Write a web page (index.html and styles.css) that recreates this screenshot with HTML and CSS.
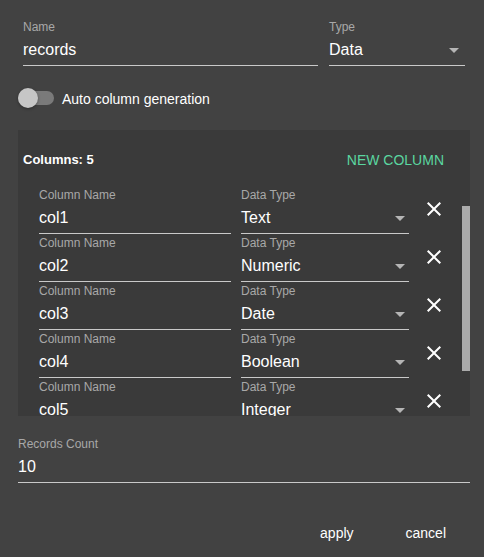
FILE: index.html
```html
<!DOCTYPE html>
<html>
<head>
<meta charset="utf-8">
<link rel="stylesheet" href="styles.css">
</head>
<body>
<div class="dialog">
  <div class="top-row">
    <div class="field field-name">
      <div class="field-label">Name</div>
      <div class="field-value">records</div>
    </div>
    <div class="field field-type">
      <div class="field-label">Type</div>
      <div class="field-value"><span>Data</span><span class="arrow arrow-top"></span></div>
    </div>
  </div>

  <div class="toggle-row">
    <div class="toggle"><div class="thumb"></div></div>
    <span class="toggle-label">Auto column generation</span>
  </div>

  <div class="panel">
    <div class="panel-head">
      <span class="count">Columns: 5</span>
      <span class="new-col">NEW COLUMN</span>
    </div>
    <div class="list-wrap">
      <div class="rows">
        <div class="row">
          <div class="field col-name"><div class="field-label">Column Name</div><div class="field-value">col1</div></div>
          <div class="field col-type"><div class="field-label">Data Type</div><div class="field-value"><span>Text</span><span class="arrow"></span></div></div>
          <svg class="close" viewBox="0 0 24 24"><path d="M19 6.41L17.59 5 12 10.59 6.41 5 5 6.41 10.59 12 5 17.59 6.41 19 12 13.41 17.59 19 19 17.59 13.41 12z"/></svg>
        </div>
        <div class="row">
          <div class="field col-name"><div class="field-label">Column Name</div><div class="field-value">col2</div></div>
          <div class="field col-type"><div class="field-label">Data Type</div><div class="field-value"><span>Numeric</span><span class="arrow"></span></div></div>
          <svg class="close" viewBox="0 0 24 24"><path d="M19 6.41L17.59 5 12 10.59 6.41 5 5 6.41 10.59 12 5 17.59 6.41 19 12 13.41 17.59 19 19 17.59 13.41 12z"/></svg>
        </div>
        <div class="row">
          <div class="field col-name"><div class="field-label">Column Name</div><div class="field-value">col3</div></div>
          <div class="field col-type"><div class="field-label">Data Type</div><div class="field-value"><span>Date</span><span class="arrow"></span></div></div>
          <svg class="close" viewBox="0 0 24 24"><path d="M19 6.41L17.59 5 12 10.59 6.41 5 5 6.41 10.59 12 5 17.59 6.41 19 12 13.41 17.59 19 19 17.59 13.41 12z"/></svg>
        </div>
        <div class="row">
          <div class="field col-name"><div class="field-label">Column Name</div><div class="field-value">col4</div></div>
          <div class="field col-type"><div class="field-label">Data Type</div><div class="field-value"><span>Boolean</span><span class="arrow"></span></div></div>
          <svg class="close" viewBox="0 0 24 24"><path d="M19 6.41L17.59 5 12 10.59 6.41 5 5 6.41 10.59 12 5 17.59 6.41 19 12 13.41 17.59 19 19 17.59 13.41 12z"/></svg>
        </div>
        <div class="row">
          <div class="field col-name"><div class="field-label">Column Name</div><div class="field-value">col5</div></div>
          <div class="field col-type"><div class="field-label">Data Type</div><div class="field-value"><span>Integer</span><span class="arrow"></span></div></div>
          <svg class="close" viewBox="0 0 24 24"><path d="M19 6.41L17.59 5 12 10.59 6.41 5 5 6.41 10.59 12 5 17.59 6.41 19 12 13.41 17.59 19 19 17.59 13.41 12z"/></svg>
        </div>
      </div>
      <div class="scrollbar"><div class="scroll-thumb"></div></div>
    </div>
  </div>

  <div class="field records">
    <div class="field-label">Records Count</div>
    <div class="field-value">10</div>
  </div>

  <div class="actions">
    <button class="btn">apply</button>
    <button class="btn">cancel</button>
  </div>
</div>
</body>
</html>
```

FILE: styles.css
```css
html, body {
  margin: 0;
  padding: 0;
  background: #424242;
  font-family: "Liberation Sans", Arial, sans-serif;
  color: #ffffff;
}

.dialog {
  width: 484px;
  height: 557px;
  overflow: hidden;
}

.top-row {
  display: flex;
  gap: 11px;
  padding: 20px 19px 0 23px;
}

.field {
  display: flex;
  flex-direction: column;
}

.field-label {
  font-size: 12px;
  line-height: 14px;
  color: #a8a8a8;
  white-space: nowrap;
}

.field-value {
  font-size: 16px;
  line-height: 20px;
  margin-top: 6px;
  padding-bottom: 5px;
  border-bottom: 1px solid #c9c9c9;
  color: #ffffff;
  display: flex;
  justify-content: space-between;
  align-items: center;
}

.field-name { width: 295px; }
.field-type { flex: 1; }

.arrow {
  width: 0;
  height: 0;
  border-left: 5px solid transparent;
  border-right: 5px solid transparent;
  border-top: 5px solid #b5b5b5;
  margin-right: 4px;
}
.arrow-top { margin-right: 6px; }

.toggle-row {
  display: flex;
  align-items: center;
  gap: 8px;
  height: 20px;
  margin: 22px 0 0 18px;
}

.toggle {
  width: 36px;
  height: 14px;
  border-radius: 7px;
  background: #7a7a7a;
}

.thumb {
  width: 20px;
  height: 20px;
  margin-top: -3px;
  border-radius: 50%;
  background: #c6c6c6;
  box-shadow: 0 1px 3px rgba(0, 0, 0, 0.35);
}

.toggle-label {
  font-size: 14px;
  line-height: 16px;
  padding-top: 1px;
}

.panel {
  margin: 22px 14px 0 18px;
  background: #3a3a3a;
}

.panel-head {
  display: flex;
  justify-content: space-between;
  align-items: center;
  padding: 22px 26px 0 5px;
  height: 16px;
}

.count {
  font-size: 13px;
  font-weight: bold;
  line-height: 16px;
}

.new-col {
  font-size: 14px;
  line-height: 16px;
  color: #5ad6a0;
}

.list-wrap {
  display: flex;
  height: 248px;
  overflow: hidden;
}

.rows {
  flex: 1;
  padding-top: 20px;
  overflow: hidden;
}

.row {
  display: flex;
  align-items: flex-start;
  padding-left: 21px;
  margin-bottom: 2px;
}

.col-name { width: 192px; }
.col-type { width: 168px; margin-left: 10px; }

.close {
  width: 24px;
  height: 24px;
  margin: 9px 0 0 13px;
  fill: #ffffff;
}

.scrollbar {
  width: 8px;
}

.scroll-thumb {
  margin-top: 38px;
  height: 165px;
  background: #ababab;
}

.records {
  margin: 21px 14px 0 18px;
}

.actions {
  display: flex;
  justify-content: flex-end;
  gap: 20px;
  margin-top: 32px;
  padding-right: 22px;
}

.btn {
  height: 36px;
  padding: 0 16px;
  border: none;
  background: transparent;
  color: #ffffff;
  font-family: "Liberation Sans", Arial, sans-serif;
  font-size: 14px;
  line-height: 36px;
}
```
